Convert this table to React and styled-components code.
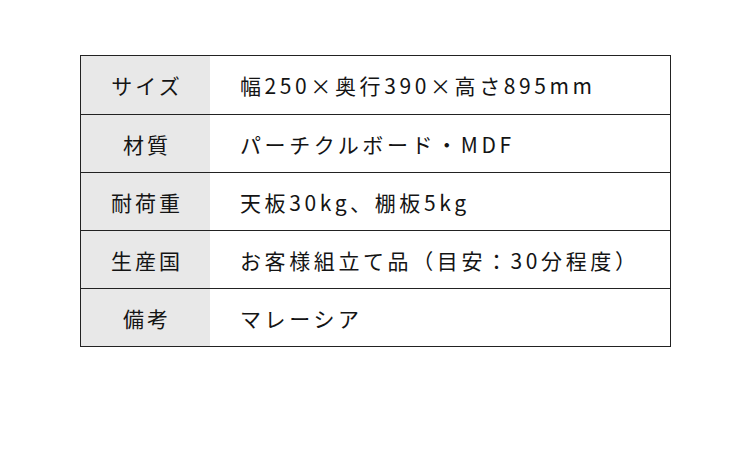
import styled, { createGlobalStyle } from "styled-components"

const Global = createGlobalStyle`
    html, body {
        margin: 0;
        padding: 0;
        background: #fff;
    }
    body {
        font-family: "Noto Sans CJK JP", "Noto Sans", sans-serif;
        color: #141414;
    }
`

const Page = styled.div`
    width: 750px;
    height: 464px;
    padding: 55px 0 0 80px;
    box-sizing: border-box;
`

const Table = styled.div`
    width: 591px;
    border: 1px solid #222;
    box-sizing: border-box;
`

const Row = styled.div`
    display: flex;
    height: 58px;
    border-top: ${ props => props.first ? 'none' : '1px solid #222'};
    box-sizing: border-box;
`

const Label = styled.div`
    width: 129px;
    background-color: #e8e8e8;
    display: flex;
    align-items: center;
    justify-content: center;
    font-size: 21px;
    letter-spacing: 3px;
    padding-left: 3px;
    box-sizing: border-box;
`

const Value = styled.div`
    flex: 1;
    display: flex;
    align-items: center;
    padding-left: 30px;
    font-size: 21px;
    letter-spacing: 3.6px;
`

const specs = [
    ['サイズ', '幅250×奥行390×高さ895mm'],
    ['材質', 'パーチクルボード・MDF'],
    ['耐荷重', '天板30kg、棚板5kg'],
    ['生産国', 'お客様組立て品（目安：30分程度）'],
    ['備考', 'マレーシア'],
]

export default function App() {
    return (
        <>
            <Global />
            <Page>
                <Table>
                    { specs.map(([k, v], i) => (
                        <Row key={ k } first={ i === 0 }>
                            <Label>{ k }</Label>
                            <Value>{ v }</Value>
                        </Row>
                    )) }
                </Table>
            </Page>
        </>
    )
}
